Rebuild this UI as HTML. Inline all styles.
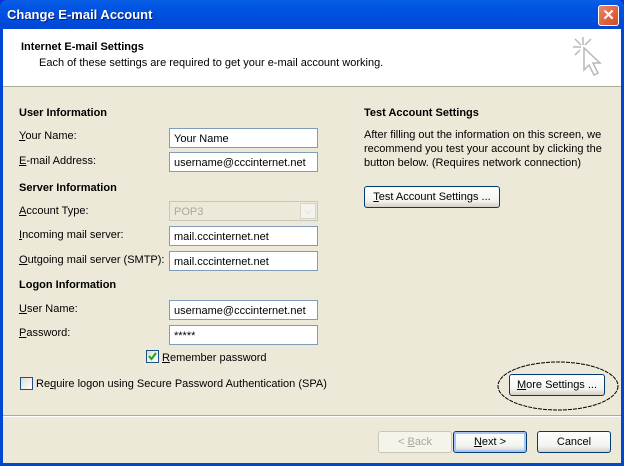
<!DOCTYPE html>
<html><head><style>
*{margin:0;padding:0;box-sizing:border-box}
body{width:624px;height:466px;overflow:hidden;font-family:"Liberation Sans",sans-serif;font-size:11px;color:#000;background:#0831d9}
#win{position:absolute;left:0;top:0;width:624px;height:466px;background:linear-gradient(#0a5fe6,#0054e3 8px,#0046d5 29px);border-radius:7px 7px 0 0}
#title{position:absolute;left:7px;top:7px;color:#fff;font-weight:bold;font-size:13px;text-shadow:1px 1px #0a1e7a}
#close{position:absolute;left:598px;top:5px;width:21px;height:21px;border:1px solid #fff;border-radius:3px;background:linear-gradient(135deg,#e9866a,#d34a22);color:#fff;font-size:15px;font-weight:bold;text-align:center;line-height:19px}
#body{position:absolute;left:3px;top:29px;width:618px;height:434px;background:#ece9d8}
#hdr{position:absolute;left:0;top:0;width:618px;height:58px;background:#fff;border-bottom:1px solid #aca899}
.a{position:absolute;white-space:nowrap;margin-top:1px}
.b{font-weight:bold}
.in{position:absolute;left:166px;width:149px;height:20px;background:#fff;border:1px solid #7f9db9;padding:4px 0 0 4px}
.btn{position:absolute;height:22px;border:1px solid #003c74;border-radius:3px;background:linear-gradient(#fff,#f3f3ef 70%,#d6d0c5);text-align:center;line-height:21px}
u{text-decoration:underline}
.cb{position:absolute;width:13px;height:13px;border:1px solid #1c5180;background:linear-gradient(135deg,#dcdcd7,#fff)}
</style></head><body>
<div id="win">
<div id="title">Change E-mail Account</div>
<div id="close">✕</div>
<div id="body">
<div id="hdr">
<div class="a b" style="left:18px;top:11px">Internet E-mail Settings</div>
<div class="a" style="left:36px;top:27px">Each of these settings are required to get your e-mail account working.</div>
<svg class="a" style="left:568px;top:5px" width="40" height="50" viewBox="0 0 40 50" fill="none" stroke="#b8b8b8" stroke-width="1.5">
<path d="M12 2v8M2 12h8M4 4l6 6M20 4l-6 6M4 20l5-5"/>
<path d="M13 13l0 22 5-5 5 10 4-2-5-10 7 0z" fill="#fff"/>
</svg>
</div>
<div class="a b" style="left:16px;top:77px">User Information</div>
<div class="a" style="left:16px;top:100px"><u>Y</u>our Name:</div>
<div class="a" style="left:16px;top:125px"><u>E</u>-mail Address:</div>
<div class="a b" style="left:16px;top:152px">Server Information</div>
<div class="a" style="left:16px;top:175px"><u>A</u>ccount Type:</div>
<div class="a" style="left:16px;top:199px"><u>I</u>ncoming mail server:</div>
<div class="a" style="left:16px;top:224px"><u>O</u>utgoing mail server (SMTP):</div>
<div class="a b" style="left:16px;top:249px">Logon Information</div>
<div class="a" style="left:16px;top:273px"><u>U</u>ser Name:</div>
<div class="a" style="left:16px;top:297px"><u>P</u>assword:</div>
<div class="in" style="top:99px">Your Name</div>
<div class="in" style="top:123px">username@cccinternet.net</div>
<div class="in" style="top:172px;background:#ece9d8;color:#aca899;border-color:#c9c7ba">POP3<div style="position:absolute;right:1px;top:1px;width:16px;height:16px;background:#f4f3ee;border:1px solid #d8d5c8;color:#c9c7ba;font-size:9px;line-height:14px;text-align:center">⌵</div></div>
<div class="in" style="top:197px">mail.cccinternet.net</div>
<div class="in" style="top:222px">mail.cccinternet.net</div>
<div class="in" style="top:271px">username@cccinternet.net</div>
<div class="in" style="top:296px">*****</div>
<div class="cb" style="left:143px;top:321px"><svg width="11" height="11" style="position:absolute;left:0;top:0"><path d="M2 5l2.5 3L9 2" stroke="#21a121" stroke-width="2" fill="none"/></svg></div>
<div class="a" style="left:159px;top:322px"><u>R</u>emember password</div>
<div class="cb" style="left:17px;top:348px"></div>
<div class="a" style="left:33px;top:348px">Re<u>q</u>uire logon using Secure Password Authentication (SPA)</div>
<div class="a b" style="left:361px;top:77px">Test Account Settings</div>
<div class="a" style="left:361px;top:98px;line-height:14px">After filling out the information on this screen, we<br>recommend you test your account by clicking the<br>button below. (Requires network connection)</div>
<div class="btn" style="left:361px;top:157px;width:136px"><u>T</u>est Account Settings ...</div>
<svg class="a" style="left:493px;top:330px" width="124" height="52"><ellipse cx="62" cy="26" rx="60" ry="24" fill="none" stroke="#000" stroke-dasharray="4 1"/></svg>
<div class="btn" style="left:506px;top:345px;width:96px"><u>M</u>ore Settings ...</div>
<div class="a" style="left:0;top:386px;width:618px;height:2px;border-top:1px solid #aca899;border-bottom:1px solid #fff;margin-top:0"></div>
<div class="btn" style="left:375px;top:402px;width:74px;border-color:#c9c7ba;color:#aca899;background:#f5f4ea">&lt; <u>B</u>ack</div>
<div class="btn" style="left:450px;top:402px;width:74px;box-shadow:inset 0 0 0 2px #aac4f3"><u>N</u>ext &gt;</div>
<div class="btn" style="left:534px;top:402px;width:74px">Cancel</div>
</div>
</div>
</body></html>
